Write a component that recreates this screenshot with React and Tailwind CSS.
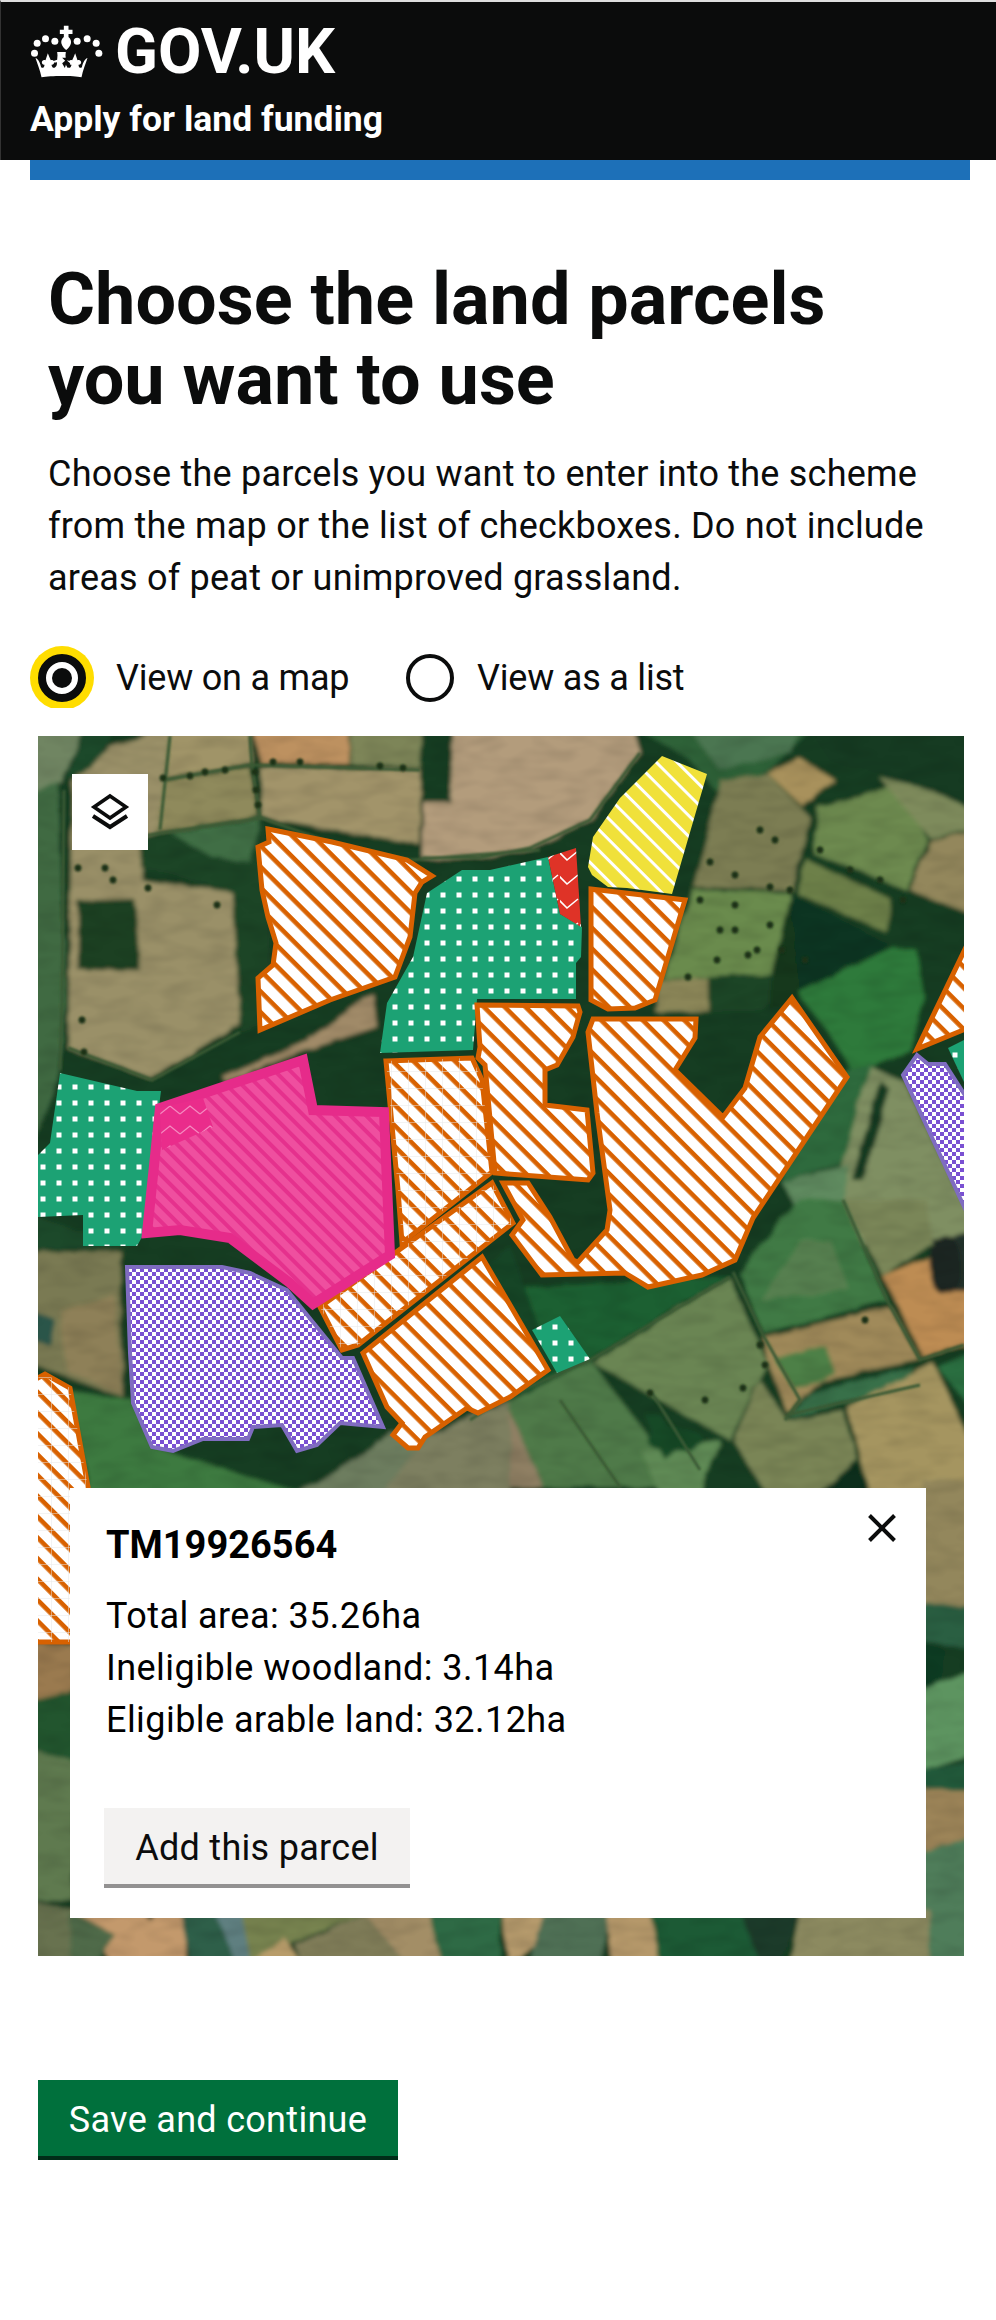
const fields = [
  // top left
  ['30,730 84,730 62,782 30,795', '#6f8562'],
  ['84,730 113,730 98,765 66,782', '#1d4a29'],
  ['30,795 58,780 66,1000 60,1073 30,1150', '#3f6a43'],
  ['72,784 112,745 170,730 156,838 140,838 142,880 232,892 246,1020 150,1078 68,1048', '#9a9067'],
  ['140,838 172,828 265,820 272,1020 240,1032 232,892 140,866', '#1d4426'],
  ['170,832 262,818 250,862 214,858', '#3f6e45'],
  ['78,902 135,900 140,970 78,970', '#1c3f22'],
  ['223,1077 303,1043 373,993 377,1027 307,1050 225,1082', '#a08a68'],
  ['170,730 250,730 252,763 165,778', '#a09468'],
  ['253,730 350,730 348,763 260,763', '#bd9160'],
  ['352,730 423,730 420,768 349,763', '#7d8558'],
  ['425,730 453,730 450,800 423,800', '#173d20'],
  ['260,767 420,770 420,845 263,818', '#a2946a'],
  ['163,781 250,767 258,816 157,832', '#8f8a5c'],
  ['453,730 633,730 640,753 590,820 530,847 480,858 423,858 423,802 450,802', '#b39c7c'],
  // top right
  ['640,730 810,730 770,770 715,790 690,760', '#2f6238'],
  ['810,730 970,730 970,830 900,780 830,760', '#123a20'],
  ['690,730 800,730 790,752 720,770', '#4b7651'],
  ['767,773 800,758 835,780 803,807', '#a8915c'],
  ['720,780 767,773 810,817 793,890 693,887 713,813', '#7b7d52'],
  ['693,890 790,893 792,963 777,973 713,977 663,980 677,937', '#6a8b4e'],
  ['663,982 770,976 788,980 764,1012 700,1010 655,1015', '#1a4426'],
  ['660,982 708,978 708,1010 655,1012', '#8b8659'],
  ['817,807 903,785 927,840 907,890 813,853', '#6d8a50'],
  ['880,778 932,790 970,810 970,830 930,838', '#7e8b5c'],
  ['930,840 970,832 970,913 910,890', '#93875c'],
  ['807,860 893,900 887,933 797,893', '#6d8049'],
  ['790,893 890,945 797,993 790,960', '#113620'],
  ['890,897 970,917 970,943 927,1003 917,950 893,947', '#143d22'],
  ['797,993 893,947 917,950 925,997 910,1050 853,1073 827,1030', '#2f7a3a'],
  ['790,895 800,1000 770,1010 770,980', '#14391f'],
  // mid right
  ['813,1077 873,1063 847,1163 780,1180', '#2d6b3c'],
  ['870,1066 905,1082 970,1215 970,1245 850,1245 840,1170', '#7f8f62'],
  ['852,1180 880,1080 890,1090 862,1180', '#123a20'],
  ['780,1180 850,1165 843,1200 800,1215', '#5f8a5f'],
  // bottom right, under the big parcel
  ['500,1290 730,1275 590,1360 505,1400', '#1f6030'],
  ['510,1245 555,1370 510,1395 470,1280', '#164427'],
  ['507,1403 590,1360 687,1487 543,1487', '#4f7a48'],
  ['593,1363 730,1277 767,1363 730,1440', '#6a8553'],
  ['470,1420 507,1403 543,1487 470,1487', '#8f7f64'],
  ['740,1273 797,1200 843,1200 887,1300 763,1333', '#3f7a45'],
  ['760,1300 800,1240 830,1240 850,1290', '#567f50'],
  ['843,1200 927,1200 933,1243 883,1277', '#7a8659'],
  ['883,1277 930,1257 970,1287 970,1343 923,1357', '#bd8c52'],
  ['932,1240 970,1232 970,1290 945,1290', '#23302a'],
  ['763,1337 890,1307 920,1360 820,1380 787,1413 767,1360', '#a08a5a'],
  ['775,1360 825,1345 835,1372 795,1390', '#4d8046'],
  ['810,1393 913,1367 910,1387 787,1417', '#37704a'],
  ['847,1407 933,1363 970,1440 970,1495 870,1495', '#a59560'],
  ['733,1440 760,1380 787,1420 843,1410 857,1460 817,1495 767,1495', '#7a8557'],
  ['817,1495 857,1463 870,1495', '#0e2f1a'],
  ['937,1367 970,1353 970,1407', '#2b6e3f'],
  ['640,1450 720,1440 700,1495 660,1495', '#5f8a55'],
  ['643,1412 660,1415 683,1450 665,1460', '#174a28'],
  // bottom left
  ['30,1253 120,1250 123,1397 30,1363', '#7a7a52'],
  ['60,1310 115,1295 122,1395 66,1370', '#8e8058'],
  ['30,1310 55,1320 50,1345 30,1340', '#2c5548'],
  ['70,1390 133,1400 153,1447 307,1495 90,1495', '#3c7a3f'],
  ['297,1495 393,1433 510,1433 510,1495', '#6d7d5e'],
  ['430,1433 510,1403 510,1495 383,1495', '#7d7f60'],
  ['30,1215 130,1246 30,1250', '#1e4a2c'],
  // left of the popup
  ['30,1644 74,1644 74,1720 30,1730', '#9a7a50'],
  ['30,1700 74,1690 74,1770 60,1770 30,1740', '#23552f'],
  ['30,1750 74,1760 74,1900 30,1900', '#5f7a50'],
  ['30,1900 74,1910 74,1962 30,1962', '#67724f'],
  // right of the popup
  ['922,1480 970,1480 970,1605 922,1605', '#93875c'],
  ['922,1605 970,1605 970,1650 922,1640', '#2c5f42'],
  ['922,1640 944,1650 942,1690 922,1690', '#0e3a22'],
  ['922,1690 970,1670 970,1755 922,1770', '#5d9460'],
  ['922,1770 970,1760 970,1790 922,1790', '#245a3a'],
  ['922,1790 970,1790 970,1840 922,1850', '#9c8458'],
  ['922,1850 970,1840 970,1962 922,1962', '#4f7d5a'],
  // bottom strip
  ['70,1910 186,1910 186,1962 112,1962', '#c3996c'],
  ['70,1910 115,1935 95,1962 70,1962', '#4f6a48'],
  ['180,1910 218,1910 245,1962 190,1962', '#2f5f4a'],
  ['215,1910 240,1910 258,1962 235,1962', '#5f7f80'],
  ['240,1910 372,1910 300,1940 250,1962', '#77834f'],
  ['250,1962 285,1938 300,1962', '#b89c6a'],
  ['295,1945 372,1910 410,1962 300,1962', '#7f7c58'],
  ['362,1910 430,1910 440,1962 405,1962', '#a38e66'],
  ['430,1910 500,1910 500,1962 440,1962', '#2f6a45'],
  ['500,1910 545,1910 548,1940 510,1962', '#b59a6c'],
  ['545,1910 610,1910 600,1962 530,1962', '#4f6f55'],
  ['605,1910 660,1910 660,1962 610,1962', '#b5986a'],
  ['650,1910 740,1910 760,1962 660,1962', '#1f5a36'],
  ['740,1910 800,1910 780,1962 760,1962', '#1a3a2a'],
  ['800,1910 930,1910 930,1962 790,1962', '#8c8a60'],
];

const hedges = [
  '164,780 250,765 420,770',
  '250,736 252,766 260,818',
  '170,736 160,830',
  '130,838 262,818 350,850 410,860 540,850',
  '64,790 62,1000 60,1070',
  '68,1048 152,1080 240,1032',
  '423,858 480,858 530,848 590,820 640,753',
  '730,1277 590,1360 500,1400 470,1420',
  '733,1272 763,1335 800,1400 785,1420',
  '650,1390 700,1470',
  '560,1400 620,1487',
  '843,1200 887,1300 920,1360 964,1345',
  '787,1415 920,1385',
];

const trees = [
  [78,868],[105,868],[113,880],[148,888],[217,905],[82,1020],[84,1052],
  [163,778],[190,776],[205,772],[225,770],[255,772],[256,790],[258,805],[273,762],[300,762],[380,766],[403,768],
  [760,830],[775,840],[710,862],[735,875],[770,887],[790,890],[700,900],[735,905],[720,930],[735,930],[757,950],[770,925],[782,950],
  [820,850],[850,870],[880,880],[903,900],[688,977],[717,960],[748,955],[805,960],
  [553,1335],[650,1393],[705,1400],[743,1388],[765,1365],[760,1345],[865,1320],
];

const blobs = [
  [675,1440,28,12,'#134a28'],
  [945,1265,16,30,'#1c2824'],
  [150,1915,4,4,'#1f3a20'],
];

// page coordinates; the svg viewBox starts at the map's corner
const parcels = [
  { fill: 'url(#dots)', points: '427,893 462,870 490,870 548,857 560,914 582,927 581,957 576,963 576,999 477,999 473,1050 380,1053 387,1003 413,957' },
  { fill: 'url(#dots)', points: '60,1073 137,1091 161,1091 142,1237 137,1246 83,1246 83,1215 38,1217 38,1155 50,1143' },
  { fill: 'url(#dots)', points: '532,1330 560,1316 590,1359 557,1373' },
  { fill: 'url(#dots)', points: '948,1048 964,1040 964,1082' },
  { fill: 'url(#chevRed)', points: '548,857 576,848 581,927 560,914' },
  { fill: 'url(#yellow)', points: '662,756 707,774 672,894 627,888 608,887 592,875 588,867 593,837 620,798' },
  { fill: 'url(#hatch)', stroke: '#d86100', width: 5, points: '268,829 332,842 407,860 432,876 422,882 415,893 410,937 395,977 330,1000 260,1030 258,978 273,965 276,943 268,917 262,890 258,847 269,842' },
  { fill: 'url(#hatch)', stroke: '#d86100', width: 5, points: '591,889 685,900 655,1000 635,1008 608,1009 591,1000' },
  { fill: 'url(#hatch)', stroke: '#d86100', width: 5, points: '593,1019 696,1019 695,1038 675,1070 723,1117 745,1088 760,1037 792,998 847,1077 753,1218 735,1260 702,1275 648,1287 625,1273 542,1275 512,1235 523,1220 503,1183 528,1183 550,1217 573,1260 578,1262 607,1230 610,1210 597,1113 588,1032' },
  { fill: 'url(#hatch)', stroke: '#d86100', width: 5, points: '477,1005 578,1006 580,1012 573,1037 557,1065 545,1070 545,1105 587,1110 593,1173 588,1180 495,1173 485,1065 478,1058 480,1047' },
  { fill: 'url(#hatch)', stroke: '#d86100', width: 5, grid: true, points: '386,1061 472,1058 482,1080 492,1172 402,1243 398,1190' },
  { fill: 'url(#hatch)', stroke: '#d86100', width: 5, grid: true, points: '492,1183 513,1223 358,1345 342,1350 320,1307' },
  { fill: 'url(#hatch)', stroke: '#d86100', width: 5, points: '482,1257 548,1370 510,1397 478,1413 467,1408 425,1437 418,1448 408,1448 393,1435 402,1423 387,1407 363,1353' },
  { fill: 'url(#hatch)', stroke: '#d86100', width: 5, points: '968,943 917,1049 968,1028' },
  { fill: 'url(#hatch)', stroke: '#d86100', width: 5, grid: true, points: '34,1380 45,1374 70,1388 88,1487 110,1642 34,1642' },
  { fill: 'url(#pink)', stroke: '#e62b8a', width: 10, points: '160,1108 303,1060 313,1110 384,1112 390,1255 313,1304 290,1283 230,1238 180,1230 147,1233' },
  { fill: 'url(#chevPink)', points: '160,1108 203,1098 213,1127 162,1150' },
  { fill: 'url(#check)', stroke: '#7f6cc0', width: 4, points: '127,1267 222,1267 250,1273 287,1290 342,1358 353,1358 383,1427 340,1423 317,1445 297,1451 282,1425 253,1427 248,1439 203,1439 173,1451 152,1447 133,1403 130,1353' },
  { fill: 'url(#check)', stroke: '#7f6cc0', width: 4, points: '917,1055 928,1064 945,1064 968,1100 968,1215 903,1075' },
];

function SatelliteMap() {
  return (
    <svg viewBox="38 736 926 1220" className="block h-full w-full bg-[#153c22]">
      <defs>
        <filter id="soft" filterUnits="userSpaceOnUse" x="0" y="700" width="1000" height="1300">
          <feTurbulence type="fractalNoise" baseFrequency="0.035" numOctaves="3" seed="4" />
          <feDisplacementMap in="SourceGraphic" scale="7" />
          <feGaussianBlur stdDeviation="2" />
        </filter>
        <filter id="tiny">
          <feGaussianBlur stdDeviation="1" />
        </filter>
        <filter id="grain" filterUnits="userSpaceOnUse" x="38" y="736" width="926" height="1220">
          <feTurbulence type="fractalNoise" baseFrequency="0.03 0.08" numOctaves="2" seed="9" />
          <feColorMatrix values="0 0 0 0 0  0 0 0 0 0  0 0 0 0 0  1.4 0 0 0 -0.55" />
          <feGaussianBlur stdDeviation="1.2" />
        </filter>
        <pattern id="hatch" width="14.7" height="14.7" patternUnits="userSpaceOnUse" patternTransform="rotate(45)">
          <rect width="14.7" height="14.7" fill="#fff" />
          <rect width="14.7" height="4.6" fill="#d86100" />
        </pattern>
        <pattern id="faint" width="17" height="17" patternUnits="userSpaceOnUse">
          <path d="M0 0H17M0 0V17" stroke="#e8e8e8" strokeWidth="1" fill="none" />
        </pattern>
        <pattern id="yellow" width="14.7" height="14.7" patternUnits="userSpaceOnUse" patternTransform="rotate(45)">
          <rect width="14.7" height="14.7" fill="#f0e13a" />
          <rect width="14.7" height="3" fill="#fff" />
        </pattern>
        <pattern id="pink" width="11" height="11" patternUnits="userSpaceOnUse" patternTransform="rotate(45)">
          <rect width="11" height="11" fill="#ef4f9f" />
          <rect width="11" height="4" fill="#e5318d" />
        </pattern>
        <pattern id="dots" x="8.5" y="12.5" width="16" height="16" patternUnits="userSpaceOnUse">
          <rect width="16" height="16" fill="#1ca274" />
          <rect width="5" height="5" fill="#fff" />
        </pattern>
        <pattern id="check" width="8" height="8" patternUnits="userSpaceOnUse">
          <rect width="8" height="8" fill="#fff" />
          <rect width="4" height="4" fill="#7a50d2" />
          <rect x="4" y="4" width="4" height="4" fill="#7a50d2" />
        </pattern>
        <pattern id="chevRed" y="6" width="20" height="24" patternUnits="userSpaceOnUse">
          <rect width="20" height="24" fill="#df3327" />
          <path d="M-2 5 L7 14 L18 5" fill="none" stroke="#fff" strokeWidth="1.6" />
        </pattern>
        <pattern id="chevPink" width="20" height="20" patternUnits="userSpaceOnUse">
          <rect width="20" height="20" fill="#ea2c8b" />
          <path d="M0 14 L10 6 L20 14" fill="none" stroke="#f58bc0" strokeWidth="1.2" />
        </pattern>
      </defs>

      <g filter="url(#soft)">
        <rect x="0" y="700" width="1000" height="1300" fill="#153c22" />
        {fields.map(([points, fill]) => (
          <polygon key={points} points={points} fill={fill} />
        ))}
        {blobs.map(([cx, cy, rx, ry, fill]) => (
          <ellipse key={cx} cx={cx} cy={cy} rx={rx} ry={ry} fill={fill} />
        ))}
      </g>
      <rect x="38" y="736" width="926" height="1220" filter="url(#grain)" opacity="0.14" />
      <g filter="url(#tiny)">
        {hedges.map((points) => (
          <polyline key={points} points={points} fill="none" stroke="#3b5a34" strokeWidth="3" />
        ))}
        {trees.map(([cx, cy]) => (
          <circle key={`${cx}-${cy}`} cx={cx} cy={cy} r="3.4" fill="#1c3318" />
        ))}
      </g>

      {parcels.map((p) => (
        <g key={p.points}>
          <polygon
            points={p.points}
            fill={p.fill}
            stroke={p.stroke ?? 'none'}
            strokeWidth={p.width ?? 0}
            strokeLinejoin="miter"
          />
          {p.grid && <polygon points={p.points} fill="url(#faint)" />}
        </g>
      ))}
    </svg>
  );
}

function Crown() {
  const pearls = [[27,108],[35,78],[60,64],[88,72],[155,72],[185,64],[212,78],[220,108]];
  return (
    <svg viewBox="14 20 218 168" className="h-[56px] w-[73px] shrink-0" fill="#fff">
      {pearls.map(([cx, cy]) => (
        <circle key={cx} cx={cx} cy={cy} r="10.5" />
      ))}
      <path d="M115 25h14v12h12v13h-12v9c7 6 9 13 7 20c-2 8-8 13-14 19c-6-6-12-11-14-19c-2-7 0-14 7-20v-9h-12V37h12z" />
      <path d="M30 122c10 4 14 16 17 28c5 4 10 0 10-8c-4 1-8-2-8-7c0-6 6-9 11-6l7-21c3 8 6 15 9 21c5-3 10 0 10 6c0 5-4 8-8 7c1 8 6 12 11 8c5-4 6-10 5-16c-4 3-10 2-12-2l13-5 1-13-1-10h26l-1 10 1 13 13 5c-2 4-8 5-12 2c-1 6 0 12 5 16c5 4 10 0 11-8c-4 1-8-2-8-7c0-6 5-9 10-6c3-6 6-13 9-21l7 21c5-3 11 0 11 6c0 5-4 8-8 7c0 8 5 12 10 8c3-12 7-24 17-28c-5 16-14 36-18 58c-25-5-92-5-120 0c-4-22-13-42-18-58z" />
      <path d="M110 121h22l-7 9l9 8l-8 14l-4-12l-4 12l-8-14l9-8z" fill="#0b0c0c" />
    </svg>
  );
}

function Radio({ checked, label, className, labelClassName }) {
  return (
    <label className={`flex items-center ${className}`}>
      <span className={checked ? 'relative flex h-[64px] w-[64px] shrink-0 items-center justify-center' : 'flex h-[64px] w-[64px] shrink-0 items-center justify-center'}>
        {checked && <span className="absolute inset-0 rounded-full bg-[#ffdd00] [clip-path:inset(0_0_2px_0)]" />}
        <span className={checked
          ? 'relative flex h-[48px] w-[48px] items-center justify-center rounded-full border-[8px] border-[#0b0c0c] bg-white'
          : 'h-[48px] w-[48px] rounded-full border-[4px] border-[#0b0c0c] bg-white'}>
          {checked && <span className="h-[20px] w-[20px] rounded-full bg-[#0b0c0c]" />}
        </span>
      </span>
      <span className={`text-[36px] leading-[52px] ${labelClassName}`}>{label}</span>
    </label>
  );
}

export default function App() {
  return (
    <div className="h-[2320px] w-[996px] overflow-hidden bg-white font-['Roboto',sans-serif] text-[#0b0c0c]">
      <header className="h-[160px] border-t-2 border-l border-t-[#dedede] border-l-[#333] bg-[#0b0c0c] pl-[29px] text-white">
        <div className="flex items-center gap-[12px] pt-[20px]">
          <Crown />
          <span className="text-[63px] leading-[60px] font-bold">GOV.UK</span>
        </div>
        <p className="mt-[15px] text-[35.5px] leading-[44px] font-bold">Apply for land funding</p>
      </header>
      <div className="ml-[30px] h-[20px] w-[940px] bg-[#1d70b8]" />

      <main>
        <h1 className="mt-[80px] ml-[48px] text-[72px] leading-[80px] font-bold">
          Choose the land parcels
          <br />
          you want to use
        </h1>
        <p className="mt-[28px] ml-[48px] text-[36px] leading-[52px] tracking-[0.22px]">
          Choose the parcels you want to enter into the scheme
          <br />
          from the map or the list of checkboxes. Do not include
          <br />
          areas of peat or unimproved grassland.
        </p>

        <div className="mt-[42px] ml-[30px] flex">
          <Radio checked label="View on a map" className="w-[368px]" labelClassName="ml-[22px] -tracking-[0.2px]" />
          <Radio label="View as a list" labelClassName="ml-[15px] -tracking-[0.2px]" />
        </div>

        <div className="relative mt-[26px] ml-[38px] h-[1220px] w-[926px]">
          <SatelliteMap />

          <button className="absolute top-[38px] left-[34px] flex h-[76px] w-[76px] items-center justify-center bg-white">
            <svg viewBox="0 0 76 76" className="h-[76px] w-[76px]" fill="none" stroke="#0b0c0c" strokeWidth="3.6">
              <path d="M38 22L54 33L38 44L22 33Z" />
              <path d="M21 42L38 53L55 42" strokeWidth="4" />
            </svg>
          </button>

          <div className="absolute top-[752px] left-[32px] h-[430px] w-[856px] bg-white pt-[37px] pl-[36px]">
            <h2 className="text-[38px] leading-[40px] font-bold text-black">TM19926564</h2>
            <p className="mt-[25px] text-[36px] leading-[52px] tracking-[0.45px] text-black">
              Total area: 35.26ha
              <br />
              Ineligible woodland: 3.14ha
              <br />
              Eligible arable land: 32.12ha
            </p>
            <button className="mt-[62px] -ml-[2px] h-[80px] w-[306px] border-b-4 border-b-[#929191] bg-[#f3f2f1] pt-[3px] text-[36px] leading-[52px] tracking-[0.3px]">
              Add this parcel
            </button>
            <svg viewBox="0 0 28 28" className="absolute top-[26px] right-[30px] h-[28px] w-[28px]" fill="none" stroke="#0b0c0c" strokeWidth="4">
              <path d="M1.5 1.5L26.5 26.5M26.5 1.5L1.5 26.5" />
            </svg>
          </div>
        </div>

        <button className="mt-[124px] ml-[38px] h-[80px] w-[360px] border-b-4 border-b-[#002d18] bg-[#00703c] pt-[3px] text-[36px] leading-[52px] tracking-[0.3px] text-white">
          Save and continue
        </button>
      </main>
    </div>
  );
}
